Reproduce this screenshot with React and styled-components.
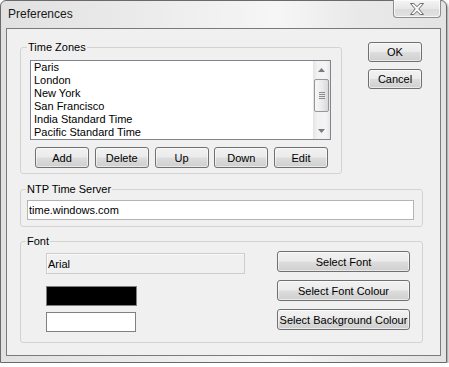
import React from "react";
import styled, { createGlobalStyle } from "styled-components";

const GlobalStyle = createGlobalStyle`
  html, body {
    margin: 0;
    padding: 0;
    background: #ffffff;
  }
  body {
    font-family: "Liberation Sans", Arial, sans-serif;
    font-size: 11px;
    color: #000;
  }
  * {
    box-sizing: border-box;
  }
`;

const Window = styled.div`
  width: 447px;
  height: 363px;
  display: flex;
  flex-direction: column;
  padding: 0 5px 6px 5px;
  border: 1px solid #6a6a6a;
  border-radius: 6px 6px 0 0;
  background: linear-gradient(
    to right,
    #e1e1e1 0%,
    #ececec 35%,
    #f6f6f6 62%,
    #e9e9e9 80%,
    #e3e3e3 100%
  );
  box-shadow: 1px 2px 3px rgba(0, 0, 0, 0.45);
`;

const TitleBar = styled.div`
  height: 27px;
  display: flex;
  justify-content: space-between;
  align-items: flex-start;
  padding-left: 2px;
`;

const Title = styled.span`
  padding-top: 6px;
  font-size: 12px;
  line-height: 15px;
  color: #1a1a1a;
`;

const CloseButton = styled.div`
  width: 48px;
  height: 18px;
  margin-top: -1px;
  display: flex;
  align-items: center;
  justify-content: center;
  border: 1px solid #8e8e8e;
  border-top: none;
  border-radius: 0 0 4px 4px;
  background: linear-gradient(#f4f4f4 0%, #e8e8e8 50%, #dadada 51%, #e2e2e2 100%);
  box-shadow: inset 0 0 0 1px rgba(255, 255, 255, 0.7);
`;

const Client = styled.div`
  width: 435px;
  height: 328px;
  border: 1px solid #7b7b7b;
  background: #f0f0f0;
  padding: 12px 0 0 13px;
`;

const TopRow = styled.div`
  display: flex;
  align-items: flex-start;
`;

const Group = styled.fieldset`
  margin: ${(p) => p.$mt || 0}px 0 0 0;
  padding: 0;
  width: ${(p) => p.$w}px;
  min-width: 0;
  border: 1px solid #d3d3d3;
  border-radius: 3px;
`;

const Legend = styled.legend`
  margin-left: ${(p) => p.$indent || 5}px;
  padding: 0 1px;
  font-size: 11px;
  line-height: 13px;
`;

const TzBody = styled.div`
  padding: 6px 10px 5px 9px;
  display: flex;
  flex-direction: column;
  gap: 7px;
`;

const ListBox = styled.div`
  width: 301px;
  height: 80px;
  display: flex;
  border: 1px solid #80848c;
  background: #fff;
`;

const Items = styled.div`
  flex: 1;
  padding-left: 3px;
  overflow: hidden;
`;

const Item = styled.div`
  line-height: 13px;
  white-space: nowrap;
`;

const ScrollBar = styled.div`
  width: 17px;
  display: flex;
  flex-direction: column;
  background: linear-gradient(to right, #e4e4e4 0%, #f2f2f2 25%, #f4f4f4 75%, #e8e8e8 100%);
`;

const ScrollArrow = styled.div`
  height: 17px;
  display: flex;
  align-items: center;
  justify-content: center;
`;

const Thumb = styled.div`
  height: 33px;
  margin: 1px 1px 0 1px;
  display: flex;
  flex-direction: column;
  align-items: center;
  justify-content: center;
  gap: 1px;
  border: 1px solid #979797;
  border-radius: 2px;
  background: linear-gradient(to right, #f7f7f7 0%, #ececec 50%, #d8d8d8 100%);
`;

const Grip = styled.div`
  width: 6px;
  height: 1px;
  background: #8a8a8a;
`;

const ScrollTrack = styled.div`
  flex: 1;
`;

const ButtonRow = styled.div`
  display: flex;
  justify-content: space-between;
  padding: 0 3px 0 5px;
`;

const Button = styled.button`
  width: ${(p) => p.$w}px;
  height: ${(p) => p.$h || 21}px;
  padding: 0;
  font-family: "Liberation Sans", Arial, sans-serif;
  font-size: 11px;
  color: #000;
  border: 1px solid #707070;
  border-radius: 3px;
  background: linear-gradient(#f2f2f2 0%, #ebebeb 48%, #dddddd 52%, #cfcfcf 100%);
  box-shadow: inset 0 0 0 1px rgba(255, 255, 255, 0.55);
  white-space: nowrap;
`;

const SideColumn = styled.div`
  margin: 1px 0 0 26px;
  display: flex;
  flex-direction: column;
  gap: 7px;
`;

const NtpBody = styled.div`
  padding: 4px 7px 6px 6px;
`;

const TextField = styled.input`
  display: block;
  width: 387px;
  height: 20px;
  padding: 0 0 0 1px;
  font-family: "Liberation Sans", Arial, sans-serif;
  font-size: 11px;
  color: #000;
  border: 1px solid #b4b4b4;
  background: #fff;
  outline: none;
`;

const FontBody = styled.div`
  display: flex;
  justify-content: space-between;
  padding: 0 12px 10px 25px;
`;

const FontLeft = styled.div`
  padding-top: 5px;
  display: flex;
  flex-direction: column;
`;

const FontRight = styled.div`
  padding-top: 3px;
  display: flex;
  flex-direction: column;
  gap: 8px;
`;

const FontName = styled.div`
  width: 199px;
  height: 21px;
  padding-left: 1px;
  display: flex;
  align-items: center;
  border: 1px solid #cdcdcd;
  box-shadow: inset 1px 1px 0 #fafafa;
  background: #f0f0f0;
`;

const Swatch = styled.div`
  width: ${(p) => p.$w}px;
  height: 20px;
  margin-top: ${(p) => p.$mt}px;
  border: 1px solid #808080;
  background: ${(p) => p.$color};
`;

const ArrowIcon = ({ down }) => (
  <svg width="7" height="4" viewBox="0 0 7 4">
    <polygon
      points={down ? "0,0 7,0 3.5,4" : "3.5,0 7,4 0,4"}
      fill="#7a7a7a"
    />
  </svg>
);

const CloseIcon = () => (
  <svg width="14" height="12" viewBox="0 0 14 12">
    <polygon
      points="0.5,0.5 3.8,0.5 7,3.6 10.2,0.5 13.5,0.5 8.8,6 13.5,11.5 10.2,11.5 7,8.4 3.8,11.5 0.5,11.5 5.2,6"
      fill="#f7f7f7"
      stroke="#6b6b6b"
      strokeWidth="1"
      strokeLinejoin="round"
    />
  </svg>
);

const zones = [
  "Paris",
  "London",
  "New York",
  "San Francisco",
  "India Standard Time",
  "Pacific Standard Time",
];

const zoneButtons = ["Add", "Delete", "Up", "Down", "Edit"];

const App = () => {
  return (
    <>
      <GlobalStyle />
      <Window>
        <TitleBar>
          <Title>Preferences</Title>
          <CloseButton>
            <CloseIcon />
          </CloseButton>
        </TitleBar>
        <Client>
          <TopRow>
            <Group $w={322}>
              <Legend $indent={6}>Time Zones</Legend>
              <TzBody>
                <ListBox>
                  <Items>
                    {zones.map((z) => (
                      <Item key={z}>{z}</Item>
                    ))}
                  </Items>
                  <ScrollBar>
                    <ScrollArrow>
                      <ArrowIcon />
                    </ScrollArrow>
                    <Thumb>
                      <Grip />
                      <Grip />
                      <Grip />
                      <Grip />
                    </Thumb>
                    <ScrollTrack />
                    <ScrollArrow>
                      <ArrowIcon down />
                    </ScrollArrow>
                  </ScrollBar>
                </ListBox>
                <ButtonRow>
                  {zoneButtons.map((b) => (
                    <Button key={b} $w={54}>
                      {b}
                    </Button>
                  ))}
                </ButtonRow>
              </TzBody>
            </Group>
            <SideColumn>
              <Button $w={54} $h={20}>
                OK
              </Button>
              <Button $w={54} $h={20}>
                Cancel
              </Button>
            </SideColumn>
          </TopRow>

          <Group $w={403} $mt={9}>
            <Legend>NTP Time Server</Legend>
            <NtpBody>
              <TextField readOnly value="time.windows.com" />
            </NtpBody>
          </Group>

          <Group $w={403} $mt={8}>
            <Legend>Font</Legend>
            <FontBody>
              <FontLeft>
                <FontName>Arial</FontName>
                <Swatch $w={91} $mt={12} $color="#000000" />
                <Swatch $w={90} $mt={6} $color="#ffffff" />
              </FontLeft>
              <FontRight>
                <Button $w={133}>Select Font</Button>
                <Button $w={133}>Select Font Colour</Button>
                <Button $w={133}>Select Background Colour</Button>
              </FontRight>
            </FontBody>
          </Group>
        </Client>
      </Window>
    </>
  );
};

export default App;
